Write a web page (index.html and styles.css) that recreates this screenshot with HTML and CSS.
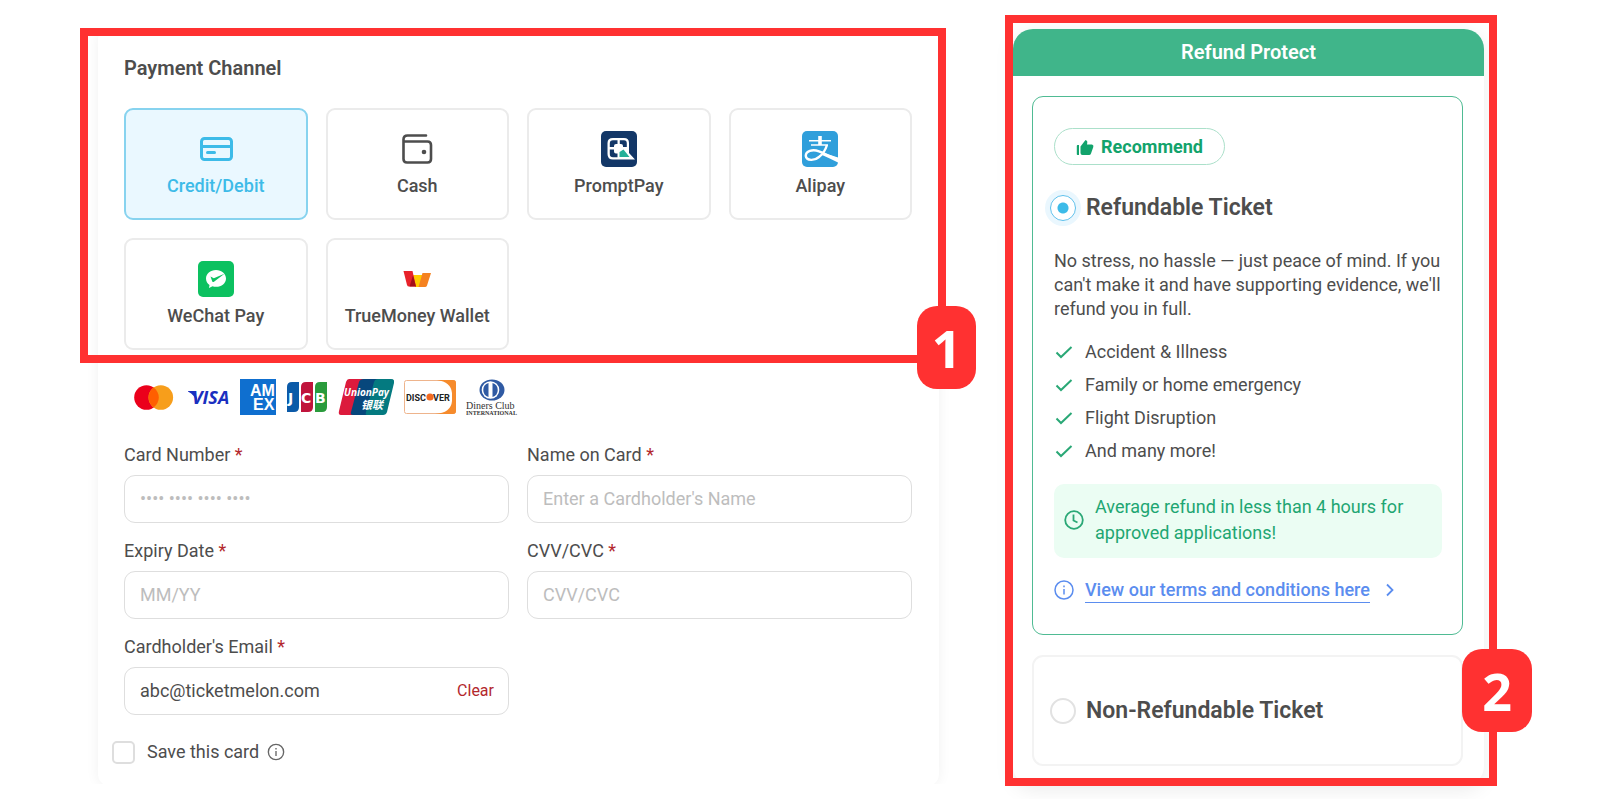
FILE: index.html
```html
<!DOCTYPE html>
<html lang="en">
<head>
    <meta charset="UTF-8">
    <meta name="viewport" content="width=device-width, initial-scale=1.0">
    <title>Payment</title>
    <link rel="stylesheet" href="styles.css">
</head>
<body>
    <main class="page">
        <form class="payment">
            <section class="channel">
                <h2>Payment Channel</h2>
                <div class="tiles">
                    <button type="button" class="tile active" aria-pressed="true">
                        <svg viewBox="0 0 36 36" fill="none" stroke="currentColor" stroke-width="3" stroke-linecap="round">
                            <rect x="3.5" y="7.5" width="30" height="21" rx="3"/>
                            <path d="M4 15.500H33" stroke-linecap="butt"/>
                            <path d="M9.500 21.500H16.500"/>
                        </svg>
                        Credit/Debit
                    </button>
                    <button type="button" class="tile">
                        <svg viewBox="0 0 36 36" fill="none" stroke="currentColor" stroke-width="2.6" stroke-linecap="round">
                            <path d="M27 4.500H8.500Q4.500 4.500 4.500 8.500V28Q4.500 31.500 8 31.500H28.500Q32 31.500 32 28V14Q32 10.500 28.500 10.500H5"/>
                            <circle cx="25" cy="21" r="2.300" fill="currentColor" stroke="none"/>
                        </svg>
                        Cash
                    </button>
                    <button type="button" class="tile">
                        <svg viewBox="0 0 36 36">
                            <rect width="36" height="36" rx="5" fill="#133767"/>
                            <path d="M12 7H23Q28 7 28 12V22L34 28.500H12Q6.500 28.500 6.500 23V12Q6.500 7 12 7Z" fill="#fff"/>
                            <g fill="#133767">
                                <path d="M8.800 16V12.500Q8.800 9.300 12 9.300H16.500V13H15Q13 13 13 15V16Z"/>
                                <path d="M18.800 9.300H23Q25.800 9.300 25.800 12.500V16H22V15Q22 13 20 13H18.800Z"/>
                                <path d="M8.800 18.500V23Q8.800 26.200 12 26.200H16.500V22.500H15Q13 22.500 13 20.500V18.500Z"/>
                            </g>
                            <path d="M18.500 26V21L22.500 18.500L28.500 26Z" fill="#25b098"/>
                        </svg>
                        PromptPay
                    </button>
                    <button type="button" class="tile">
                        <svg viewBox="0 0 36 36">
                            <rect width="36" height="36" rx="5" fill="#309fdb"/>
                            <g fill="none" stroke="#fff">
                                <path d="M7 9.700H29M9 14H26" stroke-width="1.600"/>
                                <path d="M18 5V14" stroke-width="3.600"/>
                                <path d="M25 14Q22.500 22 17 26C12.500 30 4.500 30 3.800 25C3.500 20 10.500 17.800 17 20.300C23 22.800 29 26 36 28.300" stroke-width="2.400"/>
                            </g>
                            <path d="M22 22L36 26.500V31.500Q27 27 20 24Z" fill="#fff"/>
                        </svg>
                        Alipay
                    </button>
                    <button type="button" class="tile">
                        <svg viewBox="0 0 36 36">
                            <rect width="36" height="36" rx="5" fill="#0cc160"/>
                            <path d="M18 9C12.300 9 8 12.700 8 17.500C8 20.200 9.300 22.500 11.500 24L11 27L14.500 25.300C15.600 25.700 16.800 25.800 18 25.800C23.700 25.800 28 22.200 28 17.500C28 12.700 23.700 9 18 9Z" fill="#fff"/>
                            <path d="M12.500 15.500L15.800 17.300L26.500 12.800L16 20.800Q14.700 21.500 14.200 20.200Z" fill="#0cc160"/>
                        </svg>
                        WeChat Pay
                    </button>
                    <button type="button" class="tile">
                        <svg viewBox="0 0 36 36">
                            <path d="M14 14H23.500L24 26H16Z" fill="#fc0"/>
                            <path d="M4.500 10H13.500L17 25.500H10Q8.500 25.500 8 24Z" fill="#e8222a"/>
                            <path d="M14 14.500L10.500 25.500H17Z" fill="#a31018"/>
                            <path d="M23.500 12H32L28 24.500Q27.500 26 26 26H19.500Z" fill="#f58220"/>
                        </svg>
                        TrueMoney Wallet
                    </button>
                </div>
                <div class="frame"></div>
                <div class="mark mark1">1</div>
            </section>

            <div class="logos">
                <svg width="44" height="36" viewBox="0 0 44 36" role="img" aria-label="Mastercard">
                    <circle cx="12.500" cy="18.500" r="12.300" fill="#eb001b"/>
                    <circle cx="26.800" cy="18.500" r="12.300" fill="#f79e1b"/>
                    <path d="M19.650 8.500A12.300 12.300 0 0 1 19.650 28.500A12.300 12.300 0 0 1 19.650 8.500Z" fill="#ff5f00"/>
                </svg>
                <svg width="42" height="36" viewBox="0 0 42 36" role="img" aria-label="Visa">
                    <path d="M0 12H6L9 19L9 24Q7 16 0 12.600Z" fill="#1a2fc0"/>
                    <text x="4" y="25" class="visa">VISA</text>
                </svg>
                <svg width="36" height="36" viewBox="0 0 36 36" role="img" aria-label="American Express">
                    <rect width="36" height="36" fill="#0f6fcf"/>
                    <text x="10" y="17" class="amex">AM</text>
                    <text x="13" y="31" class="amex">EX</text>
                </svg>
                <svg width="42" height="36" viewBox="0 0 42 36" role="img" aria-label="JCB">
                    <path d="M6 3H13V28Q13 33 8 33H1V8Q1 3 6 3Z" fill="#0b5aa8"/>
                    <path d="M20 3H27V28Q27 33 22 33H15V8Q15 3 20 3Z" fill="#c0143c"/>
                    <path d="M34 3H41V28Q41 33 36 33H29V8Q29 3 34 3Z" fill="#2a9b3c"/>
                    <text x="2" y="24" class="jcb">J</text>
                    <text x="15" y="24" class="jcb">C</text>
                    <text x="29" y="24" class="jcb">B</text>
                </svg>
                <svg width="56" height="36" viewBox="0 0 56 36" role="img" aria-label="UnionPay">
                    <path d="M11 0H28L20 36H3Q0 36 1 32L8 3Q9 0 11 0Z" fill="#dc1a3c"/>
                    <path d="M26 0H42L34 36H15Q12 36 13 33L21 3Q22 0 26 0Z" fill="#07477c"/>
                    <path d="M40 0H53Q57 0 56 4L49 33Q48 36 45 36H29Q27 36 28 33L36 3Q37 0 40 0Z" fill="#047a80"/>
                    <text x="6" y="17" class="union">UnionPay</text>
                    <text x="23" y="30" class="yinlian">银联</text>
                </svg>
                <svg width="52" height="36" viewBox="0 0 52 36" role="img" aria-label="Discover">
                    <rect x="0.500" y="1.500" width="51" height="33" rx="2" fill="#fff" stroke="#eeb48c"/>
                    <path d="M33 1H49Q52 1 52 4V32Q52 35 49 35H31Q47 34 48 22V14Q47 3 33 1Z" fill="#f68b2c"/>
                    <text x="2" y="22" class="disc">DISC</text>
                    <circle cx="26" cy="18" r="3.600" fill="#f26a21"/>
                    <text x="29" y="22" class="disc">VER</text>
                </svg>
                <svg width="52" height="38" viewBox="0 0 52 38" role="img" aria-label="Diners Club International">
                    <ellipse cx="26" cy="11" rx="12.500" ry="10.500" fill="#2f5aa3"/>
                    <circle cx="24.500" cy="11" r="8.800" fill="#fff"/>
                    <path d="M22.500 4A7.300 7.300 0 0 0 22.500 18ZM26.500 4A7.300 7.300 0 0 1 26.500 18Z" fill="#2f5aa3"/>
                    <text x="0" y="30" class="diners">Diners Club</text>
                    <text x="0" y="36" class="inter">INTERNATIONAL</text>
                </svg>
            </div>

            <div class="fields">
                <div class="field">
                    <label for="number">Card Number <span>*</span></label>
                    <input type="text" id="number" placeholder="•••• •••• •••• ••••">
                </div>
                <div class="field">
                    <label for="name">Name on Card <span>*</span></label>
                    <input type="text" id="name" placeholder="Enter a Cardholder's Name">
                </div>
                <div class="field">
                    <label for="expiry">Expiry Date <span>*</span></label>
                    <input type="text" id="expiry" placeholder="MM/YY">
                </div>
                <div class="field">
                    <label for="cvv">CVV/CVC <span>*</span></label>
                    <input type="text" id="cvv" placeholder="CVV/CVC">
                </div>
                <div class="field">
                    <label for="email">Cardholder's Email <span>*</span></label>
                    <div class="email">
                        <input type="email" id="email" value="abc@ticketmelon.com">
                        <button type="button">Clear</button>
                    </div>
                </div>
            </div>

            <div class="save">
                <input type="checkbox" id="save">
                <label for="save">Save this card</label>
                <svg width="18" height="18" viewBox="0 0 20 20" fill="none" stroke="#666" stroke-width="1.500">
                    <circle cx="10" cy="10" r="8.500"/>
                    <path d="M10 9V14.500M10 5.500V7.300"/>
                </svg>
            </div>
        </form>

        <section class="refund">
            <h2>Refund Protect</h2>
            <div class="options">
                <div class="option chosen">
                    <div class="pill">
                        <svg width="18" height="18" viewBox="0 0 18 18" fill="#12a36c">
                            <path d="M1.500 7H3V17H1.500Q0.800 17 0.800 16V8Q0.800 7 1.500 7Z"/>
                            <path d="M4.500 8.500L9.500 2Q11.800 2.500 11.300 4.500L11 6.500H16Q18 7 17.300 9L15 15.500Q14.500 17 13 17H6.500Q4.500 17 4.500 15Z"/>
                        </svg>
                        Recommend
                    </div>
                    <label class="choice">
                        <input type="radio" name="ticket" checked>
                        Refundable Ticket
                    </label>
                    <p>No stress, no hassle — just peace of mind. If you can't make it and have supporting evidence, we'll refund you in full.</p>
                    <ul>
                        <li><svg width="20" height="20" viewBox="0 0 20 20"><path d="M2.500 10.500L7 15L17.500 5"/></svg>Accident &amp; Illness</li>
                        <li><svg width="20" height="20" viewBox="0 0 20 20"><path d="M2.500 10.500L7 15L17.500 5"/></svg>Family or home emergency</li>
                        <li><svg width="20" height="20" viewBox="0 0 20 20"><path d="M2.500 10.500L7 15L17.500 5"/></svg>Flight Disruption</li>
                        <li><svg width="20" height="20" viewBox="0 0 20 20"><path d="M2.500 10.500L7 15L17.500 5"/></svg>And many more!</li>
                    </ul>
                    <div class="average">
                        <svg width="20" height="20" viewBox="0 0 20 20" fill="none" stroke="#2aa876" stroke-width="1.800">
                            <circle cx="10" cy="10" r="8.800"/>
                            <path d="M9.500 4.500V10.500L13.500 12.500"/>
                        </svg>
                        <span>Average refund in less than 4 hours for approved applications!</span>
                    </div>
                    <div class="terms">
                        <svg width="20" height="20" viewBox="0 0 20 20" fill="none" stroke="#5b8def" stroke-width="1.500">
                            <circle cx="10" cy="10" r="9"/>
                            <path d="M10 9V14.500M10 5.500V7.300"/>
                        </svg>
                        <a href="#">View our terms and conditions here</a>
                        <svg width="20" height="20" viewBox="0 0 20 20" fill="none" stroke="#5b8def" stroke-width="1.800">
                            <path d="M7 4.500L12.500 10L7 15.500"/>
                        </svg>
                    </div>
                </div>
                <div class="option">
                    <label class="choice">
                        <input type="radio" name="ticket">
                        Non-Refundable Ticket
                    </label>
                </div>
            </div>
            <div class="frame"></div>
            <div class="mark mark2">2</div>
        </section>
    </main>
</body>
</html>
```
FILE: styles.css
```css
*{padding: 0; margin: 0; box-sizing: border-box;}
body{
    background-color: #fff;
    font-family: Roboto, sans-serif;
    font-size: 18px;
    color: #4d4d4d;
}
button, input{
    font: inherit;
    color: inherit;
}
ul{list-style: none;}
svg{flex: none;}

.page{
    display: grid;
    grid-template-columns: 841fr 471fr;
    gap: 74px;
    align-items: start;
    padding: 28px 116px 13px 98px;
}

/* payment form */
.payment{
    padding: 0 27px 22px 26px;
    border-radius: 12px;
    box-shadow: 0 0 14px rgba(0,0,0,0.06);
    clip-path: inset(0 -40px 2px -40px);
}
.channel{
    position: relative;
    padding: 28px 0 13px;
}
h2{
    font-size: 20px;
    font-weight: 600;
    line-height: 24px;
}
.tiles{
    margin-top: 28px;
    display: grid;
    grid-template-columns: repeat(4, 1fr);
    gap: 18px;
}
.tile{
    height: 112px;
    display: flex;
    flex-direction: column;
    align-items: center;
    justify-content: center;
    gap: 8px;
    border: 2px solid #ebebeb;
    border-radius: 9px;
    background-color: #fff;
    font-weight: 500;
    line-height: 22px;
    cursor: pointer;
}
.tile svg{
    width: 36px;
    height: 36px;
}
.tile.active{
    border-color: #87d3ef;
    background-color: #eaf8ff;
    color: #3dbbe8;
}

/* red callouts */
.frame{
    position: absolute;
    border: 8px solid #ff3131;
    pointer-events: none;
}
.channel .frame{inset: 0 -34px 0 -44px;}
.refund .frame{inset: -14px -13px 0 -8px;}
.mark{
    position: absolute;
    height: 83px;
    border-radius: 20px;
    background-color: #ff3131;
    color: #fff;
    font-family: "Open Sans", sans-serif;
    font-size: 52px;
    font-weight: 700;
    line-height: 83px;
    text-align: center;
}
.mark1{
    width: 59px;
    right: -64px;
    bottom: -26px;
}
.mark2{
    width: 70px;
    right: -48px;
    bottom: 54px;
}

/* card logos */
.logos{
    display: flex;
    gap: 10px;
    height: 36px;
    margin-top: 16px;
    padding-left: 10px;
}
.logos text{font-family: "Open Sans", sans-serif; font-weight: 700;}
.logos .visa{font-size: 18px; font-style: italic; fill: #1a2fc0;}
.logos .amex{font-size: 16px; fill: #fff; font-family: "Liberation Sans", sans-serif;}
.logos .jcb{font-size: 14px; fill: #fff; font-family: "DejaVu Sans", sans-serif;}
.logos .union{font-size: 10px; font-style: italic; fill: #fff;}
.logos .yinlian{font-size: 11px; font-style: italic; fill: #fff; font-family: "Noto Sans CJK SC", sans-serif;}
.logos .disc{font-size: 9px; fill: #222; font-family: Roboto, sans-serif;}
.logos .diners{font-size: 10px; font-weight: 400; fill: #333; font-family: "Liberation Serif", serif;}
.logos .inter{font-size: 6px; font-weight: 700; fill: #333; font-family: "Liberation Serif", serif;}

/* fields */
.fields{
    display: grid;
    grid-template-columns: 1fr 1fr;
    gap: 16px 18px;
    margin-top: 28px;
}
.field label{
    display: block;
    margin-bottom: 8px;
    line-height: 24px;
}
.field label span{color: #b3282d;}
.field input{
    width: 100%;
    height: 48px;
    padding: 0 15px 2px;
    border: 1px solid #dedede;
    border-radius: 11px;
    background-color: #fff;
    outline: none;
}
.field input::placeholder{color: #bdbdbd;}
.email{
    position: relative;
}
.email button{
    position: absolute;
    top: 0;
    right: 15px;
    height: 46px;
    border: none;
    background: none;
    font-size: 16px;
    color: #b3282d;
    cursor: pointer;
}
.save{
    display: flex;
    align-items: center;
    margin: 25px 0 0 -12px;
    line-height: 24px;
}
.save input{
    appearance: none;
    width: 23px;
    height: 23px;
    margin-right: 12px;
    border: 2px solid #dedede;
    border-radius: 5px;
}
.save svg{margin-left: 8px;}

/* refund protect */
.refund{
    position: relative;
    margin-top: 1px;
    border-radius: 20px;
    box-shadow: 0 4px 20px rgba(0,0,0,0.08);
}
.refund h2{
    border-radius: 20px 20px 0 0;
    background-color: #40b58a;
    color: #fff;
    line-height: 46px;
    height: 47px;
    text-align: center;
}
.options{
    display: flex;
    flex-direction: column;
    gap: 20px;
    padding: 20px 21px 20px 19px;
}
.option{
    min-height: 111px;
    display: flex;
    flex-direction: column;
    justify-content: center;
    align-items: flex-start;
    padding: 31px 20px;
    border: 2px solid #f3f3f3;
    border-radius: 11px;
}
.chosen{border: 1px solid #4fbb93; padding-left: 21px;}
.pill{
    display: flex;
    align-items: center;
    gap: 7px;
    height: 37px;
    padding: 0 21px;
    border: 1px solid #abe0ca;
    border-radius: 19px;
    font-weight: 700;
    color: #12a36c;
}
.choice{
    display: flex;
    align-items: center;
    gap: 10px;
    margin-left: -4px;
    font-size: 23px;
    font-weight: 600;
    line-height: 28px;
}
.choice input{
    appearance: none;
    width: 26px;
    height: 26px;
    border: 2px solid #e2e2e2;
    border-radius: 50%;
}
.choice input:checked{
    border: 1px solid #5cc0ec;
    background: radial-gradient(circle, #3dbbe8 5px, #fff 6px);
    box-shadow: 0 0 0 5px #eaf7fe;
}
.chosen .choice{margin-top: 29px;}
.option p{
    margin-top: 27px;
    line-height: 24px;
}
.option ul{margin-top: 14px;}
.option li{
    display: flex;
    align-items: center;
    gap: 11px;
    line-height: 33px;
}
.option li path{
    fill: none;
    stroke: #2aa876;
    stroke-width: 2;
}
.average{
    display: flex;
    align-items: center;
    gap: 11px;
    width: 100%;
    margin-top: 17px;
    padding: 10px 10px 12px;
    border-radius: 10px;
    background-color: #ebfdf3;
    color: #1ea672;
    line-height: 26px;
}
.terms{
    display: flex;
    align-items: center;
    margin-top: 19px;
}
.terms a{
    margin: 0 10px 0 11px;
    border-bottom: 1px solid #5b8def;
    color: #5b8def;
    font-weight: 500;
    line-height: 25px;
    text-decoration: none;
}
```
